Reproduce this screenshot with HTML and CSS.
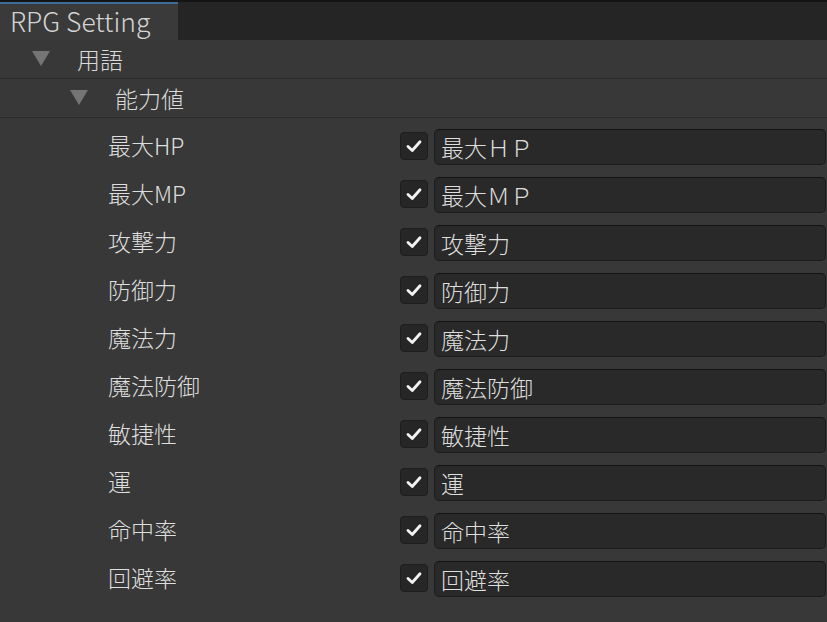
FILE: index.html
```html
<!DOCTYPE html>
<html lang="ja">
<head>
<meta charset="utf-8">
<title>RPG Setting</title>
<link rel="stylesheet" href="styles.css">
</head>
<body>
<div class="tabbar">
  <div class="tab">RPG Setting</div>
</div>
<div class="fold fold-1"><span class="tri"></span><span class="fold-label">用語</span></div>
<div class="fold fold-2"><span class="tri"></span><span class="fold-label">能力値</span></div>
<div class="list">
  <div class="row"><span class="label">最大HP</span><span class="check"><svg viewBox="0 0 16 16"><path d="M3.2 8.4 L6.6 11.6 L12.8 4.6"/></svg></span><span class="field">最大ＨＰ</span></div>
  <div class="row"><span class="label">最大MP</span><span class="check"><svg viewBox="0 0 16 16"><path d="M3.2 8.4 L6.6 11.6 L12.8 4.6"/></svg></span><span class="field">最大ＭＰ</span></div>
  <div class="row"><span class="label">攻撃力</span><span class="check"><svg viewBox="0 0 16 16"><path d="M3.2 8.4 L6.6 11.6 L12.8 4.6"/></svg></span><span class="field">攻撃力</span></div>
  <div class="row"><span class="label">防御力</span><span class="check"><svg viewBox="0 0 16 16"><path d="M3.2 8.4 L6.6 11.6 L12.8 4.6"/></svg></span><span class="field">防御力</span></div>
  <div class="row"><span class="label">魔法力</span><span class="check"><svg viewBox="0 0 16 16"><path d="M3.2 8.4 L6.6 11.6 L12.8 4.6"/></svg></span><span class="field">魔法力</span></div>
  <div class="row"><span class="label">魔法防御</span><span class="check"><svg viewBox="0 0 16 16"><path d="M3.2 8.4 L6.6 11.6 L12.8 4.6"/></svg></span><span class="field">魔法防御</span></div>
  <div class="row"><span class="label">敏捷性</span><span class="check"><svg viewBox="0 0 16 16"><path d="M3.2 8.4 L6.6 11.6 L12.8 4.6"/></svg></span><span class="field">敏捷性</span></div>
  <div class="row"><span class="label">運</span><span class="check"><svg viewBox="0 0 16 16"><path d="M3.2 8.4 L6.6 11.6 L12.8 4.6"/></svg></span><span class="field">運</span></div>
  <div class="row"><span class="label">命中率</span><span class="check"><svg viewBox="0 0 16 16"><path d="M3.2 8.4 L6.6 11.6 L12.8 4.6"/></svg></span><span class="field">命中率</span></div>
  <div class="row"><span class="label">回避率</span><span class="check"><svg viewBox="0 0 16 16"><path d="M3.2 8.4 L6.6 11.6 L12.8 4.6"/></svg></span><span class="field">回避率</span></div>
</div>
</body>
</html>
```
FILE: styles.css
```css
html, body {
  margin: 0;
  padding: 0;
}
body {
  width: 827px;
  height: 622px;
  overflow: hidden;
  background: #383838;
  color: #dadada;
  font-family: "Noto Sans CJK JP", sans-serif;
  font-weight: 300;
}
.tabbar {
  height: 40px;
  box-sizing: border-box;
  background: #252525;
  border-top: 2px solid #141414;
  display: flex;
}
.tab {
  width: 178px;
  box-sizing: border-box;
  background: #3a3a3a;
  border-top: 2px solid #3c6c98;
  font-size: 26.5px;
  line-height: 34px;
  padding-left: 10px;
  color: #d4d4d4;
  white-space: nowrap;
}
.fold {
  height: 39px;
  box-sizing: border-box;
  border-bottom: 1px solid #2b2b2b;
  display: flex;
  align-items: center;
  font-size: 23px;
}
.tri {
  width: 0;
  height: 0;
  border-left: 9px solid transparent;
  border-right: 9px solid transparent;
  border-top: 15px solid #757575;
  margin-top: -2px;
}
.fold-1 .tri { margin-left: 32px; margin-right: 27px; }
.fold-2 .tri { margin-left: 70px; margin-right: 27px; }
.fold-label {
  line-height: 1;
  margin-top: 1px;
}
.list {
  padding-top: 5px;
}
.row {
  height: 48px;
  display: flex;
  align-items: center;
}
.label {
  width: 292px;
  padding-left: 108px;
  font-size: 23px;
  line-height: 1;
  color: #dedede;
  margin-top: -3px;
}
.check {
  width: 28px;
  height: 28px;
  box-sizing: border-box;
  background: #262626;
  border: 1px solid #1e1e1e;
  border-radius: 4px;
  display: flex;
  align-items: center;
  justify-content: center;
  margin-top: -3px;
}
.check svg {
  width: 20px;
  height: 20px;
}
.check path {
  fill: none;
  stroke: #f2f2f2;
  stroke-width: 2.3;
  stroke-linecap: round;
  stroke-linejoin: round;
}
.field {
  margin-left: 6px;
  width: 392px;
  height: 36px;
  box-sizing: border-box;
  background: #292929;
  border: 1px solid #1c1c1c;
  border-top-color: #121212;
  border-radius: 5px;
  padding-left: 6px;
  font-size: 23px;
  line-height: 34px;
  color: #dedede;
  white-space: nowrap;
}
```
